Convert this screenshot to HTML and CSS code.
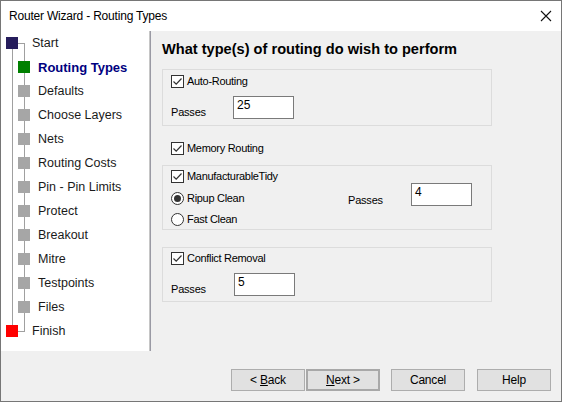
FILE: index.html
```html
<!DOCTYPE html>
<html>
<head>
<meta charset="utf-8">
<link rel="stylesheet" href="styles.css">
</head>
<body>
<div class="window">
  <div class="titlebar">
    <span class="title">Router Wizard - Routing Types</span>
    <svg class="close" width="12" height="12" viewBox="0 0 12 12"><path d="M1 1 L11 11 M11 1 L1 11" stroke="#111" stroke-width="1.1" fill="none"/></svg>
  </div>
  <div class="body">
    <div class="steps">
      <div class="tree">
        <div class="line v1"></div>
        <div class="line v2"></div>
        <div class="line h1"></div>
        <div class="line h2"></div>
        <div class="row top"><span class="sq navy"></span><span class="lbl">Start</span></div>
        <div class="row sub"><span class="sq green"></span><span class="lbl cur">Routing Types</span></div>
        <div class="row sub"><span class="sq grey"></span><span class="lbl">Defaults</span></div>
        <div class="row sub"><span class="sq grey"></span><span class="lbl">Choose Layers</span></div>
        <div class="row sub"><span class="sq grey"></span><span class="lbl">Nets</span></div>
        <div class="row sub"><span class="sq grey"></span><span class="lbl">Routing Costs</span></div>
        <div class="row sub"><span class="sq grey"></span><span class="lbl">Pin - Pin Limits</span></div>
        <div class="row sub"><span class="sq grey"></span><span class="lbl">Protect</span></div>
        <div class="row sub"><span class="sq grey"></span><span class="lbl">Breakout</span></div>
        <div class="row sub"><span class="sq grey"></span><span class="lbl">Mitre</span></div>
        <div class="row sub"><span class="sq grey"></span><span class="lbl">Testpoints</span></div>
        <div class="row sub"><span class="sq grey"></span><span class="lbl">Files</span></div>
        <div class="row top"><span class="sq red"></span><span class="lbl">Finish</span></div>
      </div>
    </div>
    <div class="sep"></div>
    <div class="content">
      <h1 class="heading">What type(s) of routing do wish to perform</h1>

      <div class="group g1">
        <div class="check"><span class="cb"><svg width="11" height="11" viewBox="0 0 11 11"><path d="M1.5 5.5 L4.2 8.2 L9.5 2.5" stroke="#333" stroke-width="1.2" fill="none"/></svg></span>Auto-Routing</div>
        <div class="passes"><span class="plabel">Passes</span><div class="input">25</div></div>
      </div>

      <div class="check solo"><span class="cb"><svg width="11" height="11" viewBox="0 0 11 11"><path d="M1.5 5.5 L4.2 8.2 L9.5 2.5" stroke="#333" stroke-width="1.2" fill="none"/></svg></span>Memory Routing</div>

      <div class="group g2">
        <div class="col">
          <div class="check"><span class="cb"><svg width="11" height="11" viewBox="0 0 11 11"><path d="M1.5 5.5 L4.2 8.2 L9.5 2.5" stroke="#333" stroke-width="1.2" fill="none"/></svg></span>ManufacturableTidy</div>
          <div class="radio first"><span class="rb on"></span>Ripup Clean</div>
          <div class="radio"><span class="rb"></span>Fast Clean</div>
        </div>
        <div class="passes right"><span class="plabel">Passes</span><div class="input">4</div></div>
      </div>

      <div class="group g3">
        <div class="check"><span class="cb"><svg width="11" height="11" viewBox="0 0 11 11"><path d="M1.5 5.5 L4.2 8.2 L9.5 2.5" stroke="#333" stroke-width="1.2" fill="none"/></svg></span>Conflict Removal</div>
        <div class="passes"><span class="plabel">Passes</span><div class="input i3">5</div></div>
      </div>
    </div>
  </div>
  <div class="footer">
    <button class="btn back">&lt; <u>B</u>ack</button>
    <button class="btn next"><u>N</u>ext &gt;</button>
    <button class="btn cancel">Cancel</button>
    <button class="btn">Help</button>
  </div>
</div>
</body>
</html>
```

FILE: styles.css
```css
* { box-sizing: border-box; }
html, body { margin: 0; padding: 0; }
body {
  font-family: "Liberation Sans", Arial, sans-serif;
  color: #000;
  background: #f0f0f0;
}
.window {
  width: 562px;
  height: 402px;
  border: 1px solid #767676;
  display: flex;
  flex-direction: column;
  background: #f0f0f0;
}
.titlebar {
  height: 30px;
  flex: none;
  background: #fff;
  display: flex;
  align-items: center;
  justify-content: space-between;
  padding: 0 9px 0 8px;
}
.title {
  font-size: 12px;
  letter-spacing: -0.2px;
  color: #000;
}
.close { display: block; }
.body {
  height: 320px;
  flex: none;
  display: flex;
}
.steps {
  width: 148px;
  background: #fff;
  flex: none;
}
.tree {
  position: relative;
}
.line {
  position: absolute;
  background: #a0a0a0;
  z-index: 0;
}
.v1 { left: 11px; top: 18px; width: 1px; height: 276px; }
.v2 { left: 23px; top: 12px; width: 1px; height: 289px; }
.h1 { left: 17px; top: 12px; width: 7px; height: 1px; }
.h2 { left: 17px; top: 300px; width: 7px; height: 1px; }
.row {
  height: 24px;
  display: flex;
  align-items: center;
  position: relative;
  z-index: 1;
  font-size: 12.5px;
  color: #1a1a1a;
}
.row.top { padding-left: 5px; }
.row.top .lbl { margin-left: 14px; }
.row.sub { padding-left: 17px; }
.row.sub .lbl { margin-left: 8px; }
.sq { width: 12px; height: 12px; flex: none; display: block; }
.navy { background: #261d5c; }
.green { background: #008000; }
.grey { background: #a6a6a6; }
.red { background: #ff0000; }
.lbl.cur { color: #000080; font-weight: bold; font-size: 13px; }
.sep {
  width: 2px;
  flex: none;
  border-left: 1px solid #c6c6c6;
  background: #9a9aa4;
}
.content {
  flex: 1;
  padding: 9px 0 0 11px;
}
.heading {
  margin: 0;
  font-size: 14.6px;
  line-height: 18px;
  font-weight: bold;
  color: #000;
}
.group {
  width: 330px;
  border: 1px solid #dcdcdc;
  font-size: 11px;
}
.g1 { margin-top: 11px; height: 57px; padding: 5px 8px 0 8px; }
.g2 { margin-top: 10px; height: 65px; padding: 4px 8px 0 8px; display: flex; }
.g3 { margin-top: 17px; height: 55px; padding: 4px 8px 0 8px; }
.check, .radio {
  display: flex;
  align-items: center;
  height: 13px;
  font-size: 11px;
  letter-spacing: -0.3px;
  line-height: 13px;
}
.check.solo { margin: 16px 0 0 9px; }
.cb {
  width: 13px;
  height: 13px;
  border: 1px solid #333;
  background: #fff;
  margin-right: 3px;
  flex: none;
  display: block;
}
.cb svg { display: block; }
.radio.first { margin-top: 9px; }
.radio { margin-top: 8px; }
.rb {
  width: 13px;
  height: 13px;
  border: 1px solid #333;
  border-radius: 50%;
  background: #fff;
  margin-right: 3px;
  flex: none;
  display: flex;
  align-items: center;
  justify-content: center;
}
.rb.on::after {
  content: "";
  width: 7px;
  height: 7px;
  border-radius: 50%;
  background: #333;
}
.col { width: 177px; flex: none; }
.passes {
  display: flex;
  align-items: flex-end;
  margin-top: 8px;
  font-size: 11px;
  letter-spacing: -0.2px;
}
.passes.right { margin-top: 13px; align-self: flex-start; }
.plabel { width: 62px; flex: none; line-height: 14px; }
.passes.right .plabel { width: 63px; margin-bottom: -1px; }
.input {
  width: 61px;
  height: 23px;
  background: #fff;
  border: 1px solid #7a7a7a;
  padding: 1px 3px;
  font-size: 12px;
  line-height: 14px;
  letter-spacing: 0;
}
.i3 { margin-left: 1px; }
.footer {
  flex: 1;
  display: flex;
  justify-content: flex-end;
  align-items: flex-start;
  padding: 18px 10px 0 0;
}
.btn {
  width: 74px;
  height: 22px;
  background: #e1e1e1;
  border: 1px solid #adadad;
  font-family: "Liberation Sans", Arial, sans-serif;
  font-size: 12px;
  letter-spacing: -0.2px;
  color: #000;
  padding: 0;
  margin: 0;
}
.btn.back { margin-right: 1px; }
.btn.next { margin-right: 11px; border: 2px solid #a8a8a8; }
.btn.cancel { margin-right: 12px; }
```
